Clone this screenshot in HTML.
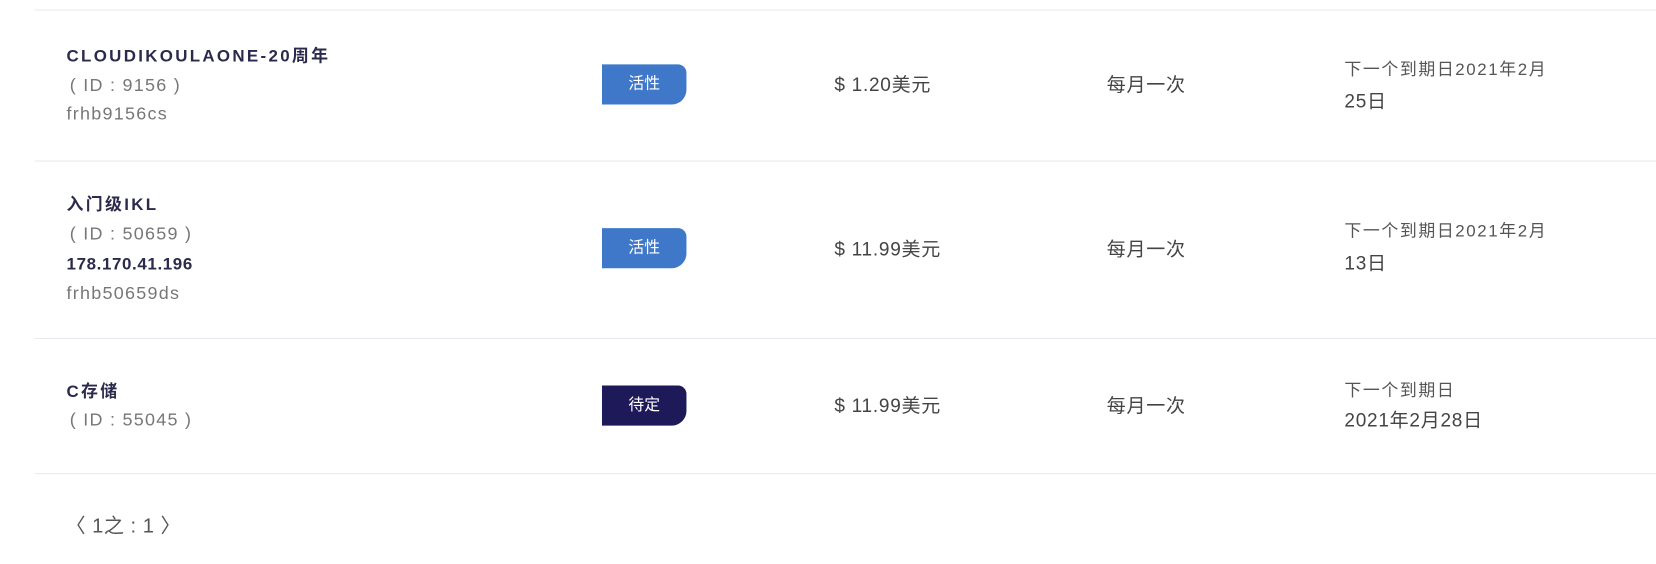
<!DOCTYPE html>
<html><head><meta charset="utf-8"><style>
body{margin:0;width:1656px;height:564px;background:#fff;overflow:hidden;font-family:"Liberation Sans","Noto Sans CJK SC",sans-serif;}
#w{position:absolute;left:0;top:0;width:1568px;height:534px;transform:scale(1.0561);transform-origin:0 0;}
.a{position:absolute;white-space:nowrap;line-height:20px;}
.line{position:absolute;left:33px;right:0;height:1px;background:#e6e9ee;}
.n{color:#2b2a4c;font-size:16px;font-weight:bold;letter-spacing:2.2px;}
.g{color:#777;font-size:17px;letter-spacing:1.2px;}
.b{position:absolute;left:570px;width:80px;height:38px;color:#fff;font-size:15px;line-height:38px;text-align:center;border-radius:0 8px 14px 0;background:#3f78c9;}
.d{background:#1e1a5a;}
.t{color:#444;font-size:18px;letter-spacing:0.7px;}
.s{color:#555;font-size:16px;letter-spacing:1.5px;}
</style></head><body><div id="w">
<div class="line" style="top:9px"></div>
<div class="line" style="top:152px"></div>
<div class="line" style="top:320px"></div>
<div class="line" style="top:448px"></div>

<div class="a n" style="left:63px;top:44px">CLOUDIKOULAONE-20周年</div>
<div class="a g" style="left:66px;top:71px">( ID : 9156 )</div>
<div class="a g" style="left:63px;top:98px">frhb9156cs</div>
<div class="b" style="top:61px">活性</div>
<div class="a t" style="left:790px;top:70px">$ 1.20美元</div>
<div class="a t" style="left:1048px;top:70px">每月一次</div>
<div class="a s" style="left:1273px;top:57px">下一个到期日2021年2月</div>
<div class="a t" style="left:1273px;top:86px">25日</div>

<div class="a n" style="left:63px;top:185px">入门级IKL</div>
<div class="a g" style="left:66px;top:212px">( ID : 50659 )</div>
<div class="a n" style="left:63px;top:241px;letter-spacing:0.6px">178.170.41.196</div>
<div class="a g" style="left:63px;top:268px">frhb50659ds</div>
<div class="b" style="top:216px">活性</div>
<div class="a t" style="left:790px;top:226px">$ 11.99美元</div>
<div class="a t" style="left:1048px;top:226px">每月一次</div>
<div class="a s" style="left:1273px;top:210px">下一个到期日2021年2月</div>
<div class="a t" style="left:1273px;top:239px">13日</div>

<div class="a n" style="left:63px;top:362px">C存储</div>
<div class="a g" style="left:66px;top:388px">( ID : 55045 )</div>
<div class="b d" style="top:365px">待定</div>
<div class="a t" style="left:790px;top:374px">$ 11.99美元</div>
<div class="a t" style="left:1048px;top:374px">每月一次</div>
<div class="a s" style="left:1273px;top:361px">下一个到期日</div>
<div class="a t" style="left:1273px;top:388px">2021年2月28日</div>

<div class="a" style="left:62px;top:489px;color:#555;font-size:19px;letter-spacing:0.5px">〈 1之 : 1 〉</div>
</div></body></html>
